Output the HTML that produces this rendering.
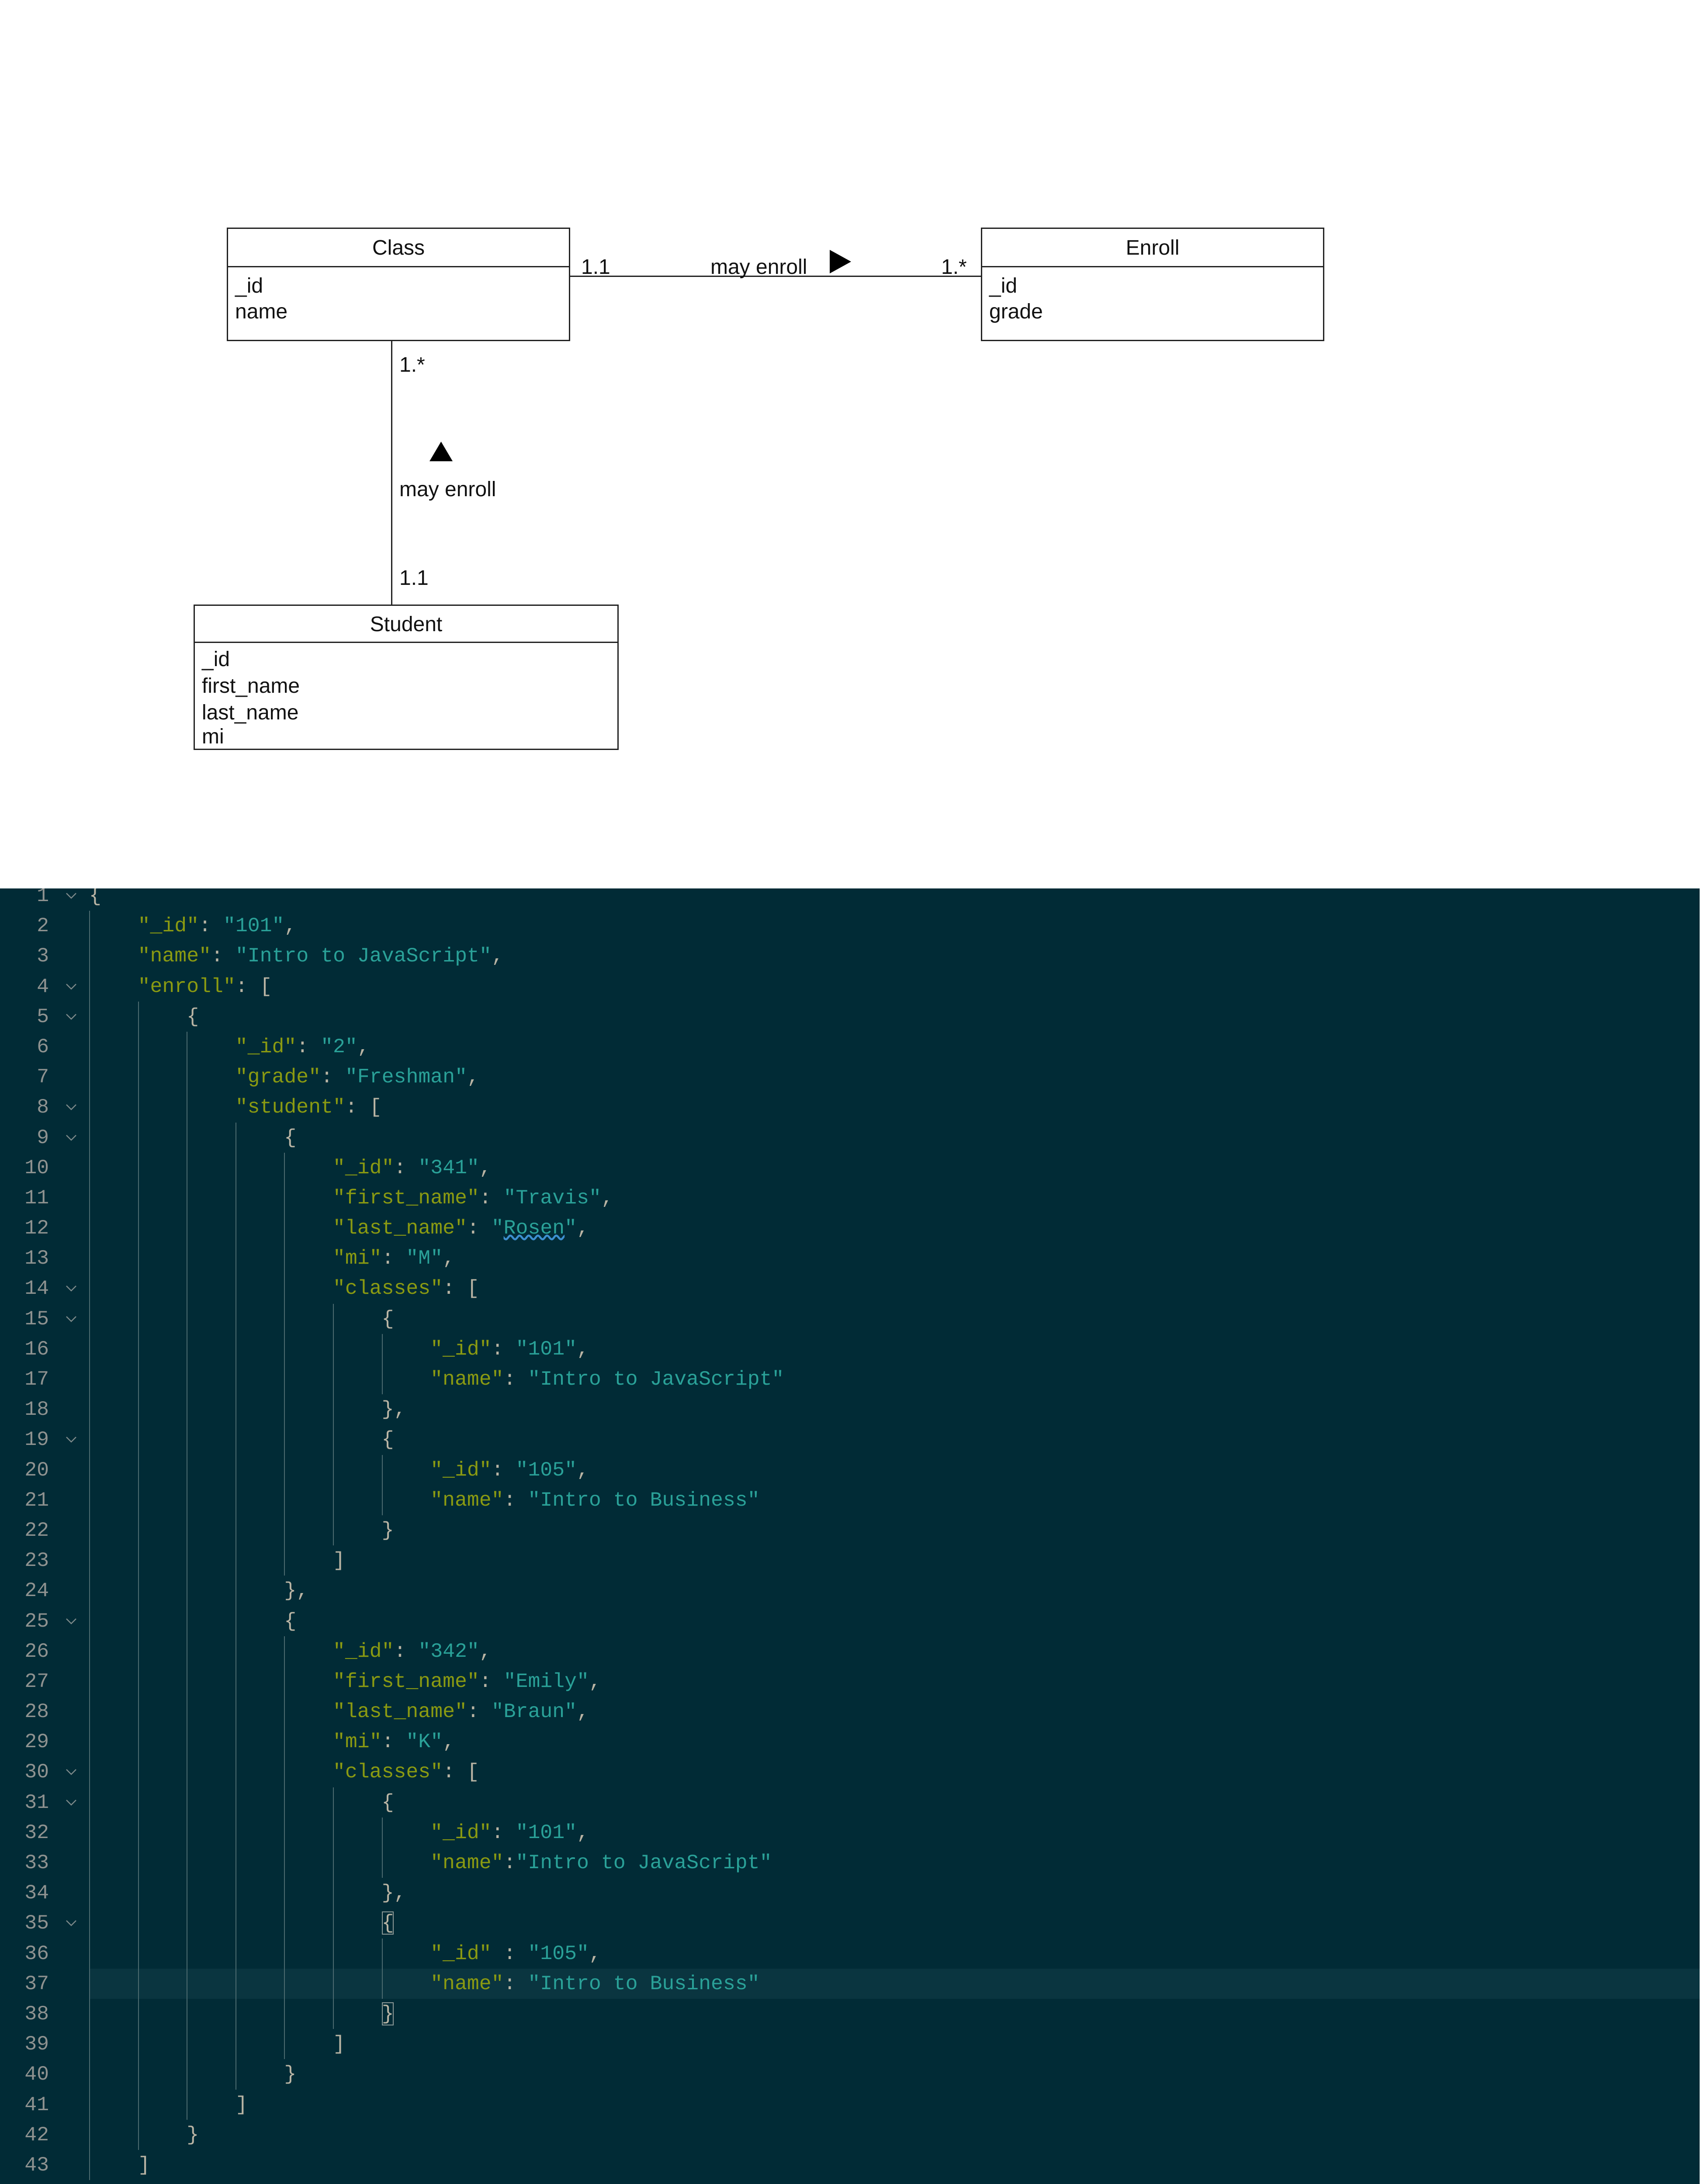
<!DOCTYPE html>
<html><head><meta charset="utf-8">
<style>
html,body{margin:0;padding:0;background:#fff;}
html{overflow:hidden;height:5306px;}
body{width:3900px;height:5306px;position:relative;overflow:hidden;font-family:"Liberation Sans",Arial,sans-serif;color:#111;}
.box{position:absolute;border:3px solid #222;box-sizing:border-box;}
.hd{position:absolute;left:0;right:0;border-bottom:3px solid #222;text-align:center;font-size:48px;}
.t{position:absolute;font-size:48px;line-height:1;white-space:nowrap;}
#code{position:absolute;left:0;top:2034px;width:3890px;height:3192px;background:#012b36;overflow:hidden;}
#inner{position:absolute;left:0;right:0;top:-18px;height:3150px;overflow:hidden;}
.r{display:flex;height:69.2px;line-height:69.2px;font-family:"Liberation Mono",monospace;font-size:46.5px;white-space:pre;}
.n{width:112px;text-align:right;color:#8e9290;flex:none;}
.c{width:92px;flex:none;position:relative;}
.c svg{position:absolute;left:34px;top:0;}
.x{flex:1;color:#b9b4a4;}
.hl .x{background:#0a3540;}
.g{display:inline-block;width:111.6px;height:69.2px;vertical-align:top;border-left:2px solid #4d6b70;box-sizing:border-box;}
.k{color:#8a9a12;}
.v{color:#2aa198;}
.bx{outline:2px solid #8e9a98;outline-offset:-2px;}
</style></head><body>

<div class="box" style="left:519px;top:521px;width:786px;height:260px;">
  <div class="hd" style="top:0;height:85px;line-height:88px;">Class</div>
  <div class="t" style="left:16px;top:107px;">_id</div>
  <div class="t" style="left:16px;top:166px;">name</div>
</div>
<div class="box" style="left:2245px;top:521px;width:786px;height:260px;">
  <div class="hd" style="top:0;height:85px;line-height:88px;">Enroll</div>
  <div class="t" style="left:16px;top:107px;">_id</div>
  <div class="t" style="left:16px;top:166px;">grade</div>
</div>
<div class="box" style="left:443px;top:1384px;width:973px;height:333px;">
  <div class="hd" style="top:0;height:82px;line-height:86px;">Student</div>
  <div class="t" style="left:16px;top:99px;">_id</div>
  <div class="t" style="left:16px;top:160px;">first_name</div>
  <div class="t" style="left:16px;top:221px;">last_name</div>
  <div class="t" style="left:16px;top:276px;">mi</div>
</div>
<div style="position:absolute;left:1305px;top:631px;width:940px;height:3px;background:#222;"></div>
<div class="t" style="left:1330px;top:588px;">1.1</div>
<div class="t" style="left:1626px;top:588px;">may enroll</div>
<svg style="position:absolute;left:1899px;top:572px;" width="50" height="54"><polygon points="0,0 49,27 0,54" fill="#000"/></svg>
<div class="t" style="left:2154px;top:588px;">1.*</div>
<div style="position:absolute;left:895px;top:780px;width:3px;height:605px;background:#222;"></div>
<div class="t" style="left:914px;top:812px;">1.*</div>
<svg style="position:absolute;left:983px;top:1011px;" width="53" height="45"><polygon points="26.5,0 53,45 0,45" fill="#000"/></svg>
<div class="t" style="left:914px;top:1097px;">may enroll</div>
<div class="t" style="left:914px;top:1300px;">1.1</div>

<div id="code"><div id="inner">
<div class="r"><span class="n">1</span><span class="c"><svg width="34" height="69"><polyline points="6,29 17,40 28,29" fill="none" stroke="#7d8a8a" stroke-width="2.5"/></svg></span><span class="x">{</span></div>
<div class="r"><span class="n">2</span><span class="c"></span><span class="x"><span class="g"></span><span class="k">"_id"</span>: <span class="v">"101"</span>,</span></div>
<div class="r"><span class="n">3</span><span class="c"></span><span class="x"><span class="g"></span><span class="k">"name"</span>: <span class="v">"Intro to JavaScript"</span>,</span></div>
<div class="r"><span class="n">4</span><span class="c"><svg width="34" height="69"><polyline points="6,29 17,40 28,29" fill="none" stroke="#7d8a8a" stroke-width="2.5"/></svg></span><span class="x"><span class="g"></span><span class="k">"enroll"</span>: [</span></div>
<div class="r"><span class="n">5</span><span class="c"><svg width="34" height="69"><polyline points="6,29 17,40 28,29" fill="none" stroke="#7d8a8a" stroke-width="2.5"/></svg></span><span class="x"><span class="g"></span><span class="g"></span>{</span></div>
<div class="r"><span class="n">6</span><span class="c"></span><span class="x"><span class="g"></span><span class="g"></span><span class="g"></span><span class="k">"_id"</span>: <span class="v">"2"</span>,</span></div>
<div class="r"><span class="n">7</span><span class="c"></span><span class="x"><span class="g"></span><span class="g"></span><span class="g"></span><span class="k">"grade"</span>: <span class="v">"Freshman"</span>,</span></div>
<div class="r"><span class="n">8</span><span class="c"><svg width="34" height="69"><polyline points="6,29 17,40 28,29" fill="none" stroke="#7d8a8a" stroke-width="2.5"/></svg></span><span class="x"><span class="g"></span><span class="g"></span><span class="g"></span><span class="k">"student"</span>: [</span></div>
<div class="r"><span class="n">9</span><span class="c"><svg width="34" height="69"><polyline points="6,29 17,40 28,29" fill="none" stroke="#7d8a8a" stroke-width="2.5"/></svg></span><span class="x"><span class="g"></span><span class="g"></span><span class="g"></span><span class="g"></span>{</span></div>
<div class="r"><span class="n">10</span><span class="c"></span><span class="x"><span class="g"></span><span class="g"></span><span class="g"></span><span class="g"></span><span class="g"></span><span class="k">"_id"</span>: <span class="v">"341"</span>,</span></div>
<div class="r"><span class="n">11</span><span class="c"></span><span class="x"><span class="g"></span><span class="g"></span><span class="g"></span><span class="g"></span><span class="g"></span><span class="k">"first_name"</span>: <span class="v">"Travis"</span>,</span></div>
<div class="r"><span class="n">12</span><span class="c"></span><span class="x"><span class="g"></span><span class="g"></span><span class="g"></span><span class="g"></span><span class="g"></span><span class="k">"last_name"</span>: <span class="v">"<span style="text-decoration:underline wavy #3d8fd0;">Rosen</span>"</span>,</span></div>
<div class="r"><span class="n">13</span><span class="c"></span><span class="x"><span class="g"></span><span class="g"></span><span class="g"></span><span class="g"></span><span class="g"></span><span class="k">"mi"</span>: <span class="v">"M"</span>,</span></div>
<div class="r"><span class="n">14</span><span class="c"><svg width="34" height="69"><polyline points="6,29 17,40 28,29" fill="none" stroke="#7d8a8a" stroke-width="2.5"/></svg></span><span class="x"><span class="g"></span><span class="g"></span><span class="g"></span><span class="g"></span><span class="g"></span><span class="k">"classes"</span>: [</span></div>
<div class="r"><span class="n">15</span><span class="c"><svg width="34" height="69"><polyline points="6,29 17,40 28,29" fill="none" stroke="#7d8a8a" stroke-width="2.5"/></svg></span><span class="x"><span class="g"></span><span class="g"></span><span class="g"></span><span class="g"></span><span class="g"></span><span class="g"></span>{</span></div>
<div class="r"><span class="n">16</span><span class="c"></span><span class="x"><span class="g"></span><span class="g"></span><span class="g"></span><span class="g"></span><span class="g"></span><span class="g"></span><span class="g"></span><span class="k">"_id"</span>: <span class="v">"101"</span>,</span></div>
<div class="r"><span class="n">17</span><span class="c"></span><span class="x"><span class="g"></span><span class="g"></span><span class="g"></span><span class="g"></span><span class="g"></span><span class="g"></span><span class="g"></span><span class="k">"name"</span>: <span class="v">"Intro to JavaScript"</span></span></div>
<div class="r"><span class="n">18</span><span class="c"></span><span class="x"><span class="g"></span><span class="g"></span><span class="g"></span><span class="g"></span><span class="g"></span><span class="g"></span>},</span></div>
<div class="r"><span class="n">19</span><span class="c"><svg width="34" height="69"><polyline points="6,29 17,40 28,29" fill="none" stroke="#7d8a8a" stroke-width="2.5"/></svg></span><span class="x"><span class="g"></span><span class="g"></span><span class="g"></span><span class="g"></span><span class="g"></span><span class="g"></span>{</span></div>
<div class="r"><span class="n">20</span><span class="c"></span><span class="x"><span class="g"></span><span class="g"></span><span class="g"></span><span class="g"></span><span class="g"></span><span class="g"></span><span class="g"></span><span class="k">"_id"</span>: <span class="v">"105"</span>,</span></div>
<div class="r"><span class="n">21</span><span class="c"></span><span class="x"><span class="g"></span><span class="g"></span><span class="g"></span><span class="g"></span><span class="g"></span><span class="g"></span><span class="g"></span><span class="k">"name"</span>: <span class="v">"Intro to Business"</span></span></div>
<div class="r"><span class="n">22</span><span class="c"></span><span class="x"><span class="g"></span><span class="g"></span><span class="g"></span><span class="g"></span><span class="g"></span><span class="g"></span>}</span></div>
<div class="r"><span class="n">23</span><span class="c"></span><span class="x"><span class="g"></span><span class="g"></span><span class="g"></span><span class="g"></span><span class="g"></span>]</span></div>
<div class="r"><span class="n">24</span><span class="c"></span><span class="x"><span class="g"></span><span class="g"></span><span class="g"></span><span class="g"></span>},</span></div>
<div class="r"><span class="n">25</span><span class="c"><svg width="34" height="69"><polyline points="6,29 17,40 28,29" fill="none" stroke="#7d8a8a" stroke-width="2.5"/></svg></span><span class="x"><span class="g"></span><span class="g"></span><span class="g"></span><span class="g"></span>{</span></div>
<div class="r"><span class="n">26</span><span class="c"></span><span class="x"><span class="g"></span><span class="g"></span><span class="g"></span><span class="g"></span><span class="g"></span><span class="k">"_id"</span>: <span class="v">"342"</span>,</span></div>
<div class="r"><span class="n">27</span><span class="c"></span><span class="x"><span class="g"></span><span class="g"></span><span class="g"></span><span class="g"></span><span class="g"></span><span class="k">"first_name"</span>: <span class="v">"Emily"</span>,</span></div>
<div class="r"><span class="n">28</span><span class="c"></span><span class="x"><span class="g"></span><span class="g"></span><span class="g"></span><span class="g"></span><span class="g"></span><span class="k">"last_name"</span>: <span class="v">"Braun"</span>,</span></div>
<div class="r"><span class="n">29</span><span class="c"></span><span class="x"><span class="g"></span><span class="g"></span><span class="g"></span><span class="g"></span><span class="g"></span><span class="k">"mi"</span>: <span class="v">"K"</span>,</span></div>
<div class="r"><span class="n">30</span><span class="c"><svg width="34" height="69"><polyline points="6,29 17,40 28,29" fill="none" stroke="#7d8a8a" stroke-width="2.5"/></svg></span><span class="x"><span class="g"></span><span class="g"></span><span class="g"></span><span class="g"></span><span class="g"></span><span class="k">"classes"</span>: [</span></div>
<div class="r"><span class="n">31</span><span class="c"><svg width="34" height="69"><polyline points="6,29 17,40 28,29" fill="none" stroke="#7d8a8a" stroke-width="2.5"/></svg></span><span class="x"><span class="g"></span><span class="g"></span><span class="g"></span><span class="g"></span><span class="g"></span><span class="g"></span>{</span></div>
<div class="r"><span class="n">32</span><span class="c"></span><span class="x"><span class="g"></span><span class="g"></span><span class="g"></span><span class="g"></span><span class="g"></span><span class="g"></span><span class="g"></span><span class="k">"_id"</span>: <span class="v">"101"</span>,</span></div>
<div class="r"><span class="n">33</span><span class="c"></span><span class="x"><span class="g"></span><span class="g"></span><span class="g"></span><span class="g"></span><span class="g"></span><span class="g"></span><span class="g"></span><span class="k">"name"</span>:<span class="v">"Intro to JavaScript"</span></span></div>
<div class="r"><span class="n">34</span><span class="c"></span><span class="x"><span class="g"></span><span class="g"></span><span class="g"></span><span class="g"></span><span class="g"></span><span class="g"></span>},</span></div>
<div class="r"><span class="n">35</span><span class="c"><svg width="34" height="69"><polyline points="6,29 17,40 28,29" fill="none" stroke="#7d8a8a" stroke-width="2.5"/></svg></span><span class="x"><span class="g"></span><span class="g"></span><span class="g"></span><span class="g"></span><span class="g"></span><span class="g"></span><span class="bx">{</span></span></div>
<div class="r"><span class="n">36</span><span class="c"></span><span class="x"><span class="g"></span><span class="g"></span><span class="g"></span><span class="g"></span><span class="g"></span><span class="g"></span><span class="g"></span><span class="k">"_id"</span> : <span class="v">"105"</span>,</span></div>
<div class="r hl"><span class="n">37</span><span class="c"></span><span class="x"><span class="g"></span><span class="g"></span><span class="g"></span><span class="g"></span><span class="g"></span><span class="g"></span><span class="g"></span><span class="k">"name"</span>: <span class="v">"Intro to Business"</span></span></div>
<div class="r"><span class="n">38</span><span class="c"></span><span class="x"><span class="g"></span><span class="g"></span><span class="g"></span><span class="g"></span><span class="g"></span><span class="g"></span><span class="bx">}</span></span></div>
<div class="r"><span class="n">39</span><span class="c"></span><span class="x"><span class="g"></span><span class="g"></span><span class="g"></span><span class="g"></span><span class="g"></span>]</span></div>
<div class="r"><span class="n">40</span><span class="c"></span><span class="x"><span class="g"></span><span class="g"></span><span class="g"></span><span class="g"></span>}</span></div>
<div class="r"><span class="n">41</span><span class="c"></span><span class="x"><span class="g"></span><span class="g"></span><span class="g"></span>]</span></div>
<div class="r"><span class="n">42</span><span class="c"></span><span class="x"><span class="g"></span><span class="g"></span>}</span></div>
<div class="r"><span class="n">43</span><span class="c"></span><span class="x"><span class="g"></span>]</span></div>
<div class="r"><span class="n">44</span><span class="c"></span><span class="x">}</span></div>
</div></div>
</body></html>
